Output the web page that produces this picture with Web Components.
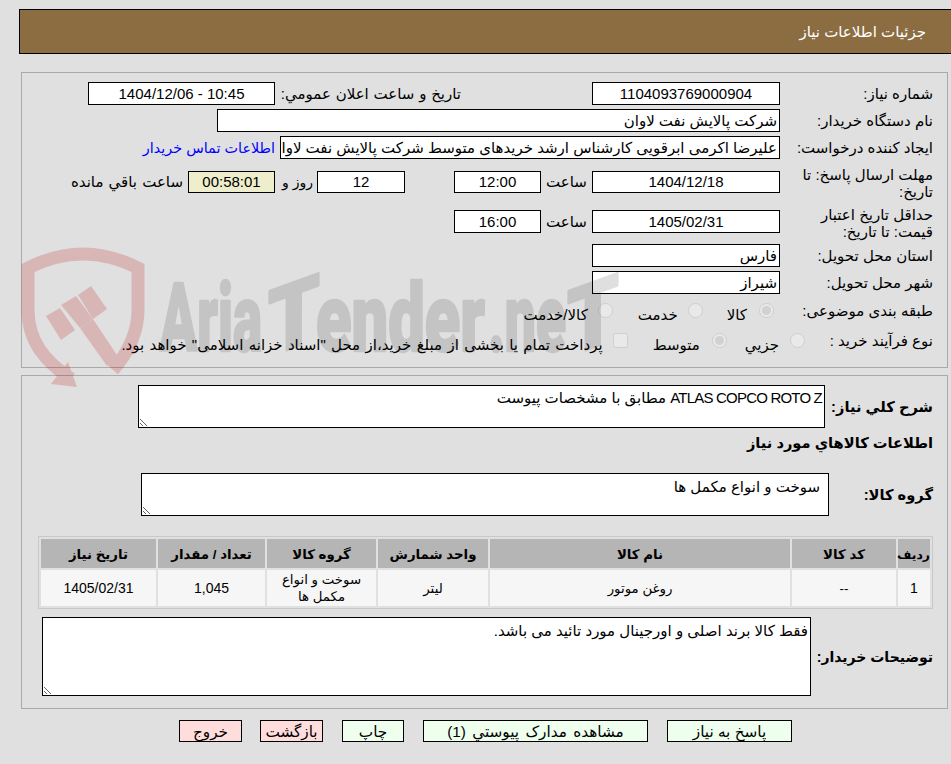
<!DOCTYPE html>
<html lang="fa">
<head>
<meta charset="utf-8">
<title>جزئیات اطلاعات نیاز</title>
<style>
  html, body { margin: 0; padding: 0; background: #e0e0e0; overflow: hidden; }
  body { width: 951px; height: 764px; position: relative; font: 15px "Liberation Sans", "DejaVu Sans", sans-serif; color: #000; }
</style>
</head>
<body>
<template id="t-watermark">
  <style>
    /* the logo is a see-through layer over the whole form, also over the white boxes */
    :host { position: absolute; left: 0; top: 0; width: 951px; height: 764px; z-index: 5; pointer-events: none; }
    svg { display: block; }
    text { font-family: "Roboto", sans-serif; font-weight: 900; fill: #000; stroke: #000; stroke-width: 2.5px; stroke-linejoin: round; }
  </style>
  <svg width="951" height="764" viewBox="0 0 951 764">
    <g opacity=".18">
      <path d="M71 379 C46 362 28 342 28 310 V268 Q83 240 138 268 V310 C138 335 126 355 113 370" fill="none" stroke="#be0000" stroke-width="13"/>
      <g fill="#be0000">
        <polygon points="68,362 77,387 51,384"/>
        <polygon points="78,295 91,286 107,309 93,319"/>
        <polygon points="61,305 76,296 93,319 80,328"/>
        <polygon points="46,316 60,308 75,330 61,340"/>
        <polygon points="80,328 93,319 119,358 107,366"/>
      </g>
    </g>
    <g opacity=".12">
      <text x="160" y="351" font-size="94" textLength="102" lengthAdjust="spacingAndGlyphs">Aria</text>
      <text transform="translate(268,357) skewY(-20)" font-size="92" textLength="52" lengthAdjust="spacingAndGlyphs">T</text>
      <text x="316" y="351" font-size="94" textLength="169" lengthAdjust="spacingAndGlyphs">ender</text>
      <text x="488" y="351" font-size="94" textLength="78" lengthAdjust="spacingAndGlyphs">.ne</text>
      <text transform="translate(567,357) skewY(-20)" font-size="92" textLength="52" lengthAdjust="spacingAndGlyphs">T</text>
    </g>
  </svg>
</template>

<template id="t-title">
  <style>
    :host { display: flex; align-items: center; box-sizing: border-box; height: 45px; margin: 9px 0 0 19px; width: 940px; padding: 1px 32px 0 0; background: #8c6d42; border: 1px solid #000; color: #fff; direction: rtl; position: relative; }
  </style>
  <slot></slot>
</template>

<template id="t-panel">
  <style>
    :host { display: block; box-sizing: border-box; position: relative; margin: 0 3px 0 21px; border: 1px solid #aaa; direction: rtl; }
  </style>
  <slot></slot>
</template>

<template id="t-row">
  <style>
    :host { display: flex; direction: rtl; align-items: center; padding-right: 14px; }
    .label { box-sizing: border-box; width: 153px; flex: none; line-height: 17px; padding-left: 8px; }
    .value { display: flex; align-items: center; flex: 1; min-width: 0; }
  </style>
  <div class="label"><slot name="label"></slot></div>
  <div class="value"><slot></slot></div>
</template>

<template id="t-box">
  <style>
    :host { display: flex; align-items: center; justify-content: center; box-sizing: border-box; height: 23px; background: #fff; border: 1px solid #000; flex: none; white-space: nowrap; overflow: hidden; }
    :host([start]) { justify-content: flex-start; padding: 0 2px; }
    :host([warn]) { background: #eeeecc; }
  </style>
  <slot></slot>
</template>

<template id="t-area">
  <style>
    :host { display: block; box-sizing: border-box; background: #fff; border: 1px solid #000; flex: none; overflow: auto; resize: both; padding: 3px 2px; direction: rtl; }
  </style>
  <slot></slot>
</template>

<template id="t-choice">
  <style>
    :host { display: inline-flex; align-items: center; flex: none; direction: rtl; }
    input { margin: 0; width: 15px; height: 15px; flex: none; opacity: .65; }
    span { display: block; margin-right: var(--gap, 10px); position: relative; top: 4px; }
  </style>
  <input disabled><span><slot></slot></span>
</template>

<template id="t-table">
  <style>
    :host { display: block; direction: rtl; }
    table { border-collapse: separate; border-spacing: 2px; width: 894px; table-layout: fixed; border: 1px solid #c8c8c8; margin: 0; font-size: 13.33px; }
    th { background: #b5b5b5; height: 27px; padding: 2px 0 0; font-size: 13.33px; }
    th.tight { font-size: 12.4px; }
    td { background: #f6f6f6; height: 36px; padding: 0; text-align: center; line-height: 17px; }
    td.num { font-size: 14px; }
  </style>
  <table>
    <colgroup><col style="width:32px"><col style="width:104px"><col style="width:300px"><col style="width:110px"><col style="width:109px"><col style="width:107px"><col style="width:115px"></colgroup>
    <thead><tr><th class="tight">رديف</th><th>کد کالا</th><th>نام کالا</th><th>واحد شمارش</th><th>گروه کالا</th><th>تعداد / مقدار</th><th>تاریخ نیاز</th></tr></thead>
    <tbody><tr><td class="num">1</td><td>--</td><td>روغن موتور</td><td>لیتر</td><td>سوخت و انواع مکمل ها</td><td class="num">1,045</td><td class="num">1405/02/31</td></tr></tbody>
  </table>
</template>

<template id="t-btn">
  <style>
    :host { display: flex; align-items: center; justify-content: center; box-sizing: border-box; height: 22px; padding-top: 1px; border: 1px solid #000; background: #eeffee; flex: none; cursor: pointer; font-size: 15.3px; }
    :host([danger]) { background: #ffdddd; }
  </style>
  <slot></slot>
</template>

<script>
  // every element just clones its own template into an open shadow root
  function register(name, tpl) {
    customElements.define(name, class extends HTMLElement {
      constructor() {
        super();
        this.attachShadow({ mode: 'open' }).appendChild(document.getElementById(tpl).content.cloneNode(true));
      }
      connectedCallback() {
        const input = this.shadowRoot.querySelector('input');
        if (input) {
          input.type = this.getAttribute('type') || 'radio';
          input.checked = this.hasAttribute('checked');
        }
      }
    });
  }
  register('aria-watermark', 't-watermark');
  register('title-bar', 't-title');
  register('info-panel', 't-panel');
  register('form-row', 't-row');
  register('field-box', 't-box');
  register('text-area', 't-area');
  register('choice-item', 't-choice');
  register('goods-table', 't-table');
  register('action-btn', 't-btn');
</script>

<title-bar>جزئیات اطلاعات نیاز</title-bar>

<info-panel style="margin-top:18px;height:296px;padding-top:9px">
  <form-row>
    <span slot="label">شماره نیاز:</span>
    <field-box style="width:188px">1104093769000904</field-box>
    <span style="margin-right:131px;width:181px;white-space:nowrap;word-spacing:.6px">تاریخ و ساعت اعلان عمومي:</span>
    <field-box style="width:187px;margin-right:5px">10:45 - 1404/12/06</field-box>
  </form-row>
  <form-row style="margin-top:4px">
    <span slot="label">نام دستگاه خریدار:</span>
    <field-box start style="width:563px">شرکت پالایش نفت لاوان</field-box>
  </form-row>
  <form-row style="margin-top:4px">
    <span slot="label">ایجاد کننده درخواست:</span>
    <field-box start style="width:500px">علیرضا اکرمی ابرقویی کارشناس ارشد خریدهای متوسط شرکت پالایش نفت لاوان</field-box>
    <a href="#" style="margin-right:5px;color:#0000ff;text-decoration:none;font-size:14.4px">اطلاعات تماس خریدار</a>
  </form-row>
  <form-row style="margin-top:4px;height:39px">
    <span slot="label">مهلت ارسال پاسخ: تا تاریخ:</span>
    <field-box style="width:188px;margin-top:-2px;height:22px">1404/12/18</field-box>
    <span style="width:51px;text-align:center;margin-top:-2px">ساعت</span>
    <field-box style="width:87px;margin-top:-2px;height:22px">12:00</field-box>
    <field-box style="width:88px;margin-right:49px;margin-top:-2px;height:22px">12</field-box>
    <span style="width:38px;padding-right:4px;margin-top:-2px;font-size:14px">روز و</span>
    <field-box warn style="width:87px;margin-top:-2px;height:22px">00:58:01</field-box>
    <span style="margin-right:5px;margin-top:-2px;word-spacing:1px">ساعت باقي مانده</span>
  </form-row>
  <form-row style="margin-top:4px;height:34px">
    <span slot="label">حداقل تاریخ اعتبار قیمت: تا تاریخ:</span>
    <field-box style="width:188px;margin-top:-3px">1405/02/31</field-box>
    <span style="width:51px;text-align:center;margin-top:-3px">ساعت</span>
    <field-box style="width:87px;margin-top:-3px">16:00</field-box>
  </form-row>
  <form-row style="margin-top:4px">
    <span slot="label">استان محل تحویل:</span>
    <field-box start style="width:188px">فارس</field-box>
  </form-row>
  <form-row style="margin-top:4px">
    <span slot="label">شهر محل تحویل:</span>
    <field-box start style="width:188px">شیراز</field-box>
  </form-row>
  <form-row style="margin-top:3px;height:27px">
    <span slot="label">طبقه بندی موضوعی:</span>
    <choice-item checked style="margin-right:6px;--gap:12px">کالا</choice-item>
    <choice-item style="margin-right:24px">خدمت</choice-item>
    <choice-item style="margin-right:25px">کالا/خدمت</choice-item>
  </form-row>
  <form-row style="margin-top:3px;height:27px">
    <span slot="label">نوع فرآیند خرید :</span>
    <choice-item style="margin-right:-25px;--gap:11px">جزیي</choice-item>
    <choice-item checked style="margin-right:18px;--gap:12px">متوسط</choice-item>
    <choice-item type="checkbox" style="margin-right:25px;--gap:10px;word-spacing:1.15px">پرداخت تمام یا بخشی از مبلغ خرید،از محل "اسناد خزانه اسلامی" خواهد بود.</choice-item>
  </form-row>
</info-panel>

<info-panel style="margin-top:7px;height:334px;padding-top:9px">
  <form-row>
    <b slot="label" style="font-size:14.67px">شرح کلي نیاز:</b>
    <text-area style="width:687px;height:43px;margin-right:-45px"><span style="letter-spacing:-.8px">ATLAS COPCO ROTO Z</span> مطابق با مشخصات پیوست</text-area>
  </form-row>
  <form-row style="margin-top:6px">
    <b style="flex:1;margin-right:-153px;font-size:14.67px">اطلاعات کالاهاي مورد نياز</b>
  </form-row>
  <form-row style="margin-top:22px">
    <b slot="label" style="font-size:14.67px">گروه کالا:</b>
    <text-area style="width:688px;height:43px;margin-right:-49px;padding:4px 8px">سوخت و انواع مکمل ها</text-area>
  </form-row>
  <goods-table style="margin:20px 14px 0 0"></goods-table>
  <form-row style="margin-top:8px">
    <b slot="label" style="font-size:14px">توضیحات خریدار:</b>
    <text-area style="width:769px;height:79px;margin-right:-31px;padding-top:4px">فقط کالا برند اصلی و اورجینال مورد تائید می باشد.</text-area>
  </form-row>
</info-panel>

<div style="display:flex;direction:rtl;margin:11px 159px 0 0;gap:19px;position:relative">
  <action-btn style="width:125px">پاسخ به نیاز</action-btn>
  <action-btn style="width:225px;word-spacing:2px">مشاهده مدارک پیوستي (1)</action-btn>
  <action-btn style="width:62px">چاپ</action-btn>
  <action-btn danger style="width:63px">بازگشت</action-btn>
  <action-btn danger style="width:63px;margin-right:-1px">خروج</action-btn>
</div>

<aria-watermark></aria-watermark>
</body>
</html>
